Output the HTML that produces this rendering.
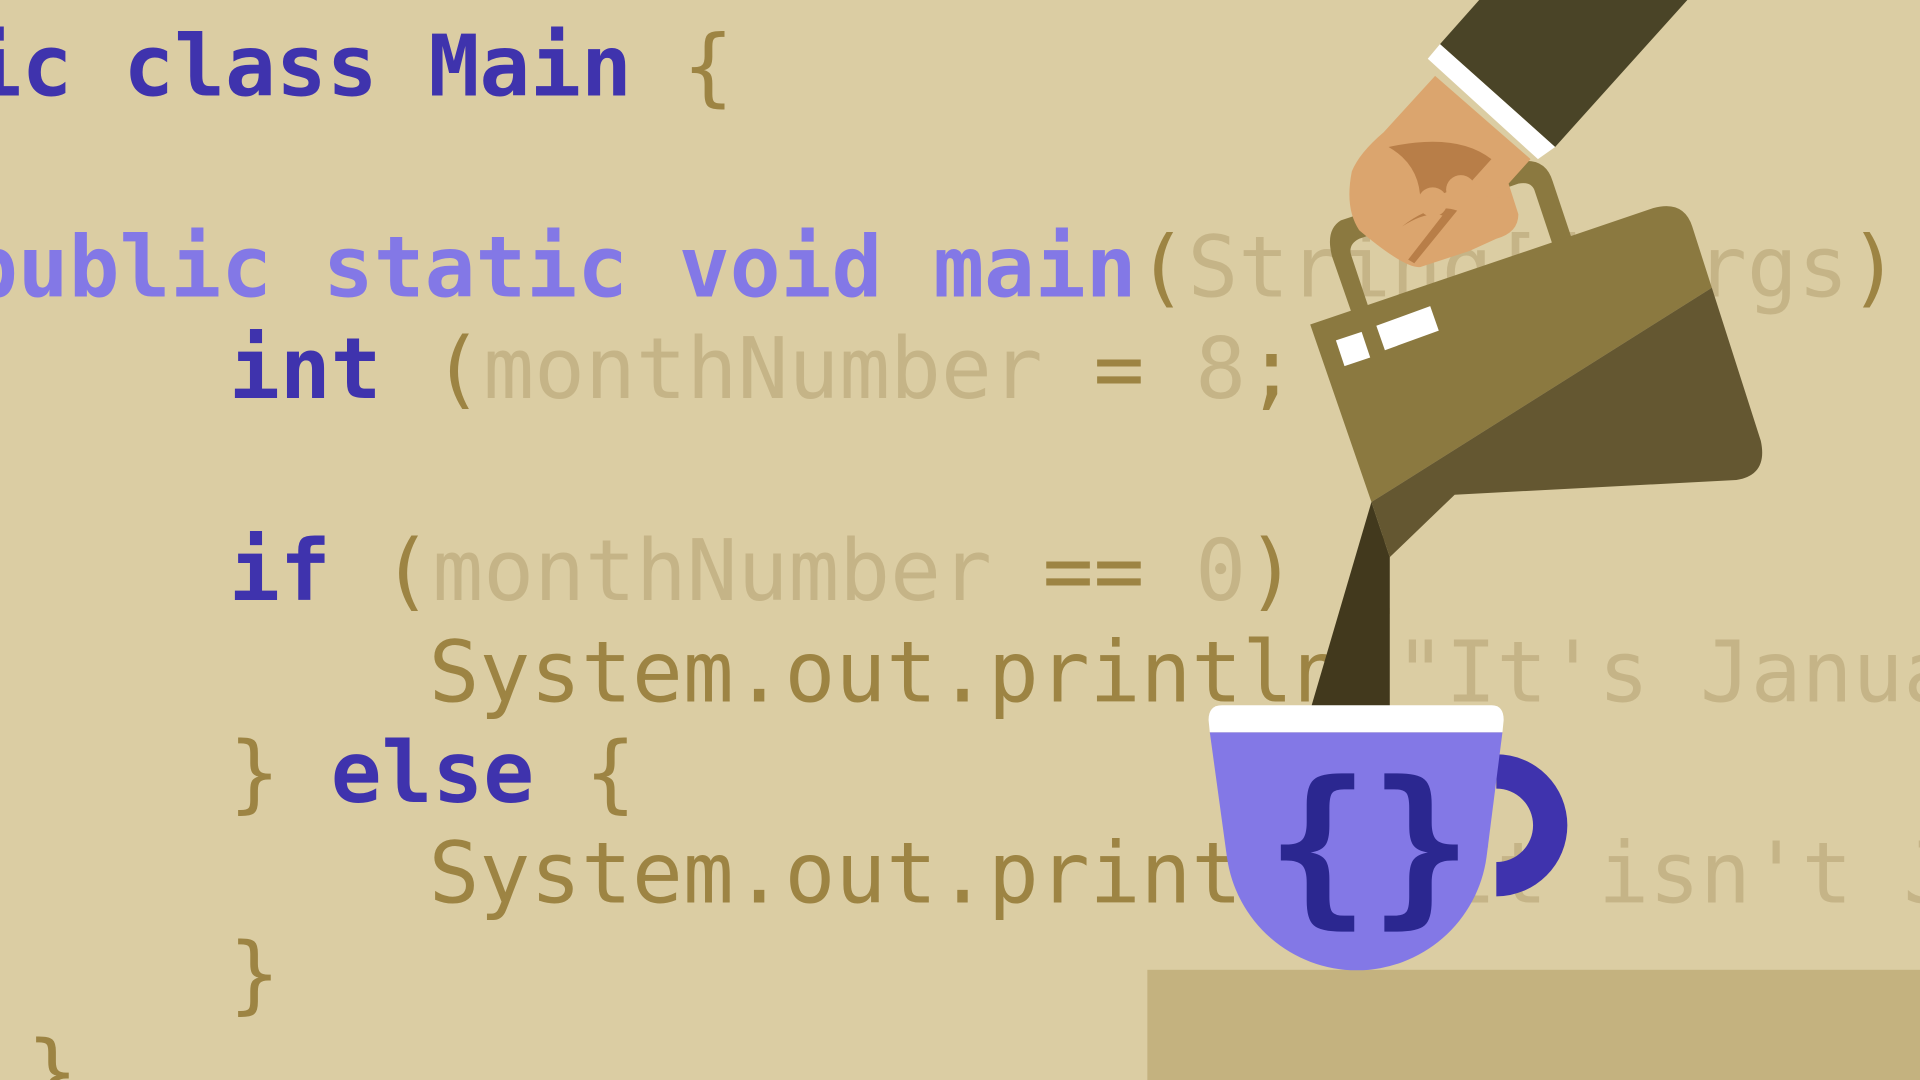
<!DOCTYPE html>
<html><head><style>
html,body{margin:0;padding:0;width:1920px;height:1080px;overflow:hidden;background:#dbcda3}
svg{display:block}
text{font-family:"DejaVu Sans Mono","Liberation Mono",monospace;font-size:69px;white-space:pre}
.k{fill:#3f33ad;font-weight:bold}.l{fill:#8378e6;font-weight:bold}.o{fill:#9d8443}.f{fill:#c5b487}
</style></head><body>
<svg width="1920" height="1080" viewBox="0 0 1568 882" xmlns="http://www.w3.org/2000/svg">
<rect width="1568" height="882" fill="#dbcda3"/>
<text x="-190" y="78"><tspan class="k">public class Main </tspan><tspan class="o">{</tspan></text>
<text x="-27" y="242"><tspan class="l">public static void main</tspan><tspan class="o">(</tspan><tspan class="f">String[] args</tspan><tspan class="o">)</tspan></text>
<text x="187" y="325"><tspan class="k">int </tspan><tspan class="o">(</tspan><tspan class="f">monthNumber </tspan><tspan class="o">= </tspan><tspan class="f">8</tspan><tspan class="o">;</tspan></text>
<text x="187" y="490"><tspan class="k">if </tspan><tspan class="o">(</tspan><tspan class="f">monthNumber </tspan><tspan class="o">== </tspan><tspan class="f">0</tspan><tspan class="o">) {</tspan></text>
<text x="350" y="573"><tspan class="o">System.out.println(</tspan><tspan class="f">"It's January"</tspan></text>
<text x="187" y="655"><tspan class="o">} </tspan><tspan class="k">else </tspan><tspan class="o">{</tspan></text>
<text x="350" y="737"><tspan class="o">System.out.println(</tspan><tspan class="f">"It isn't January"</tspan></text>
<text x="187" y="819" class="o">}</text>
<text x="22" y="899" class="o">}</text>
<rect x="937" y="792" width="631" height="90" fill="#c4b27f"/>
<polygon points="1208,0 1378,0 1270,120 1176,36" fill="#4a4427"/>
<polygon points="1176,36 1270,120 1256,130 1166,48" fill="#fff"/>
<polygon points="1120,410 1135,455 1135,580 1070,580" fill="#42391d"/>
<path d="M1095,180 L1240,132 Q1262,128 1268,148 L1284,196 L1268,200 L1253,155 Q1250,148 1240,150 L1110,195 Q1100,200 1104,210 L1118,252 L1104,256 L1088,210 Q1082,188 1095,180 Z" fill="#8b7940"/>
<path d="M1070,265 L1350,170 Q1375,163 1382,185 L1398,235 L1120,410 Z" fill="#8b7940"/>
<path d="M1398,235 L1438,360 Q1444,388 1418,392 L1188,404 L1135,455 L1120,410 Z" fill="#645731"/>
<polygon points="1091,278 1112,271 1119,292 1098,299" fill="#fff"/>
<polygon points="1124,266 1168,250 1175,270 1131,286" fill="#fff"/>
<path d="M1172,62 L1250,130 L1232,150 L1240,175 Q1240,190 1222,195 L1200,205 L1160,218 Q1148,220 1110,188 Q1098,170 1104,140 Q1110,125 1130,108 Z" fill="#dba56e"/>
<path d="M1134,120 Q1190,108 1218,130 L1200,150 L1160,165 Q1160,135 1134,120 Z" fill="#b87e48"/>
<path d="M1145,185 Q1170,165 1190,172 L1155,215 L1150,212 L1178,176 Q1165,172 1145,185 Z" fill="#b87e48"/>
<circle cx="1170" cy="165" r="12" fill="#dba56e"/><circle cx="1193" cy="155" r="12" fill="#dba56e"/><circle cx="1220" cy="150" r="12" fill="#dba56e"/>
<path d="M1222,616 A58,58 0 1 1 1222,732 L1222,704 A30,30 0 1 0 1222,644 Z" fill="#3f33ad"/>
<path d="M988,598 L1227,598 L1214,700 A107,107 0 0 1 1002,700 Z" fill="#8378e6"/>
<path d="M998,576 L1218,576 Q1228,576 1228,588 L1227,598 L988,598 L987,588 Q987,576 998,576 Z" fill="#fff"/>
<text x="1034" y="738" style="font-size:140px;font-weight:bold;fill:#2b2790;font-family:'DejaVu Sans Mono',monospace">{}</text>
</svg>
</body></html>
